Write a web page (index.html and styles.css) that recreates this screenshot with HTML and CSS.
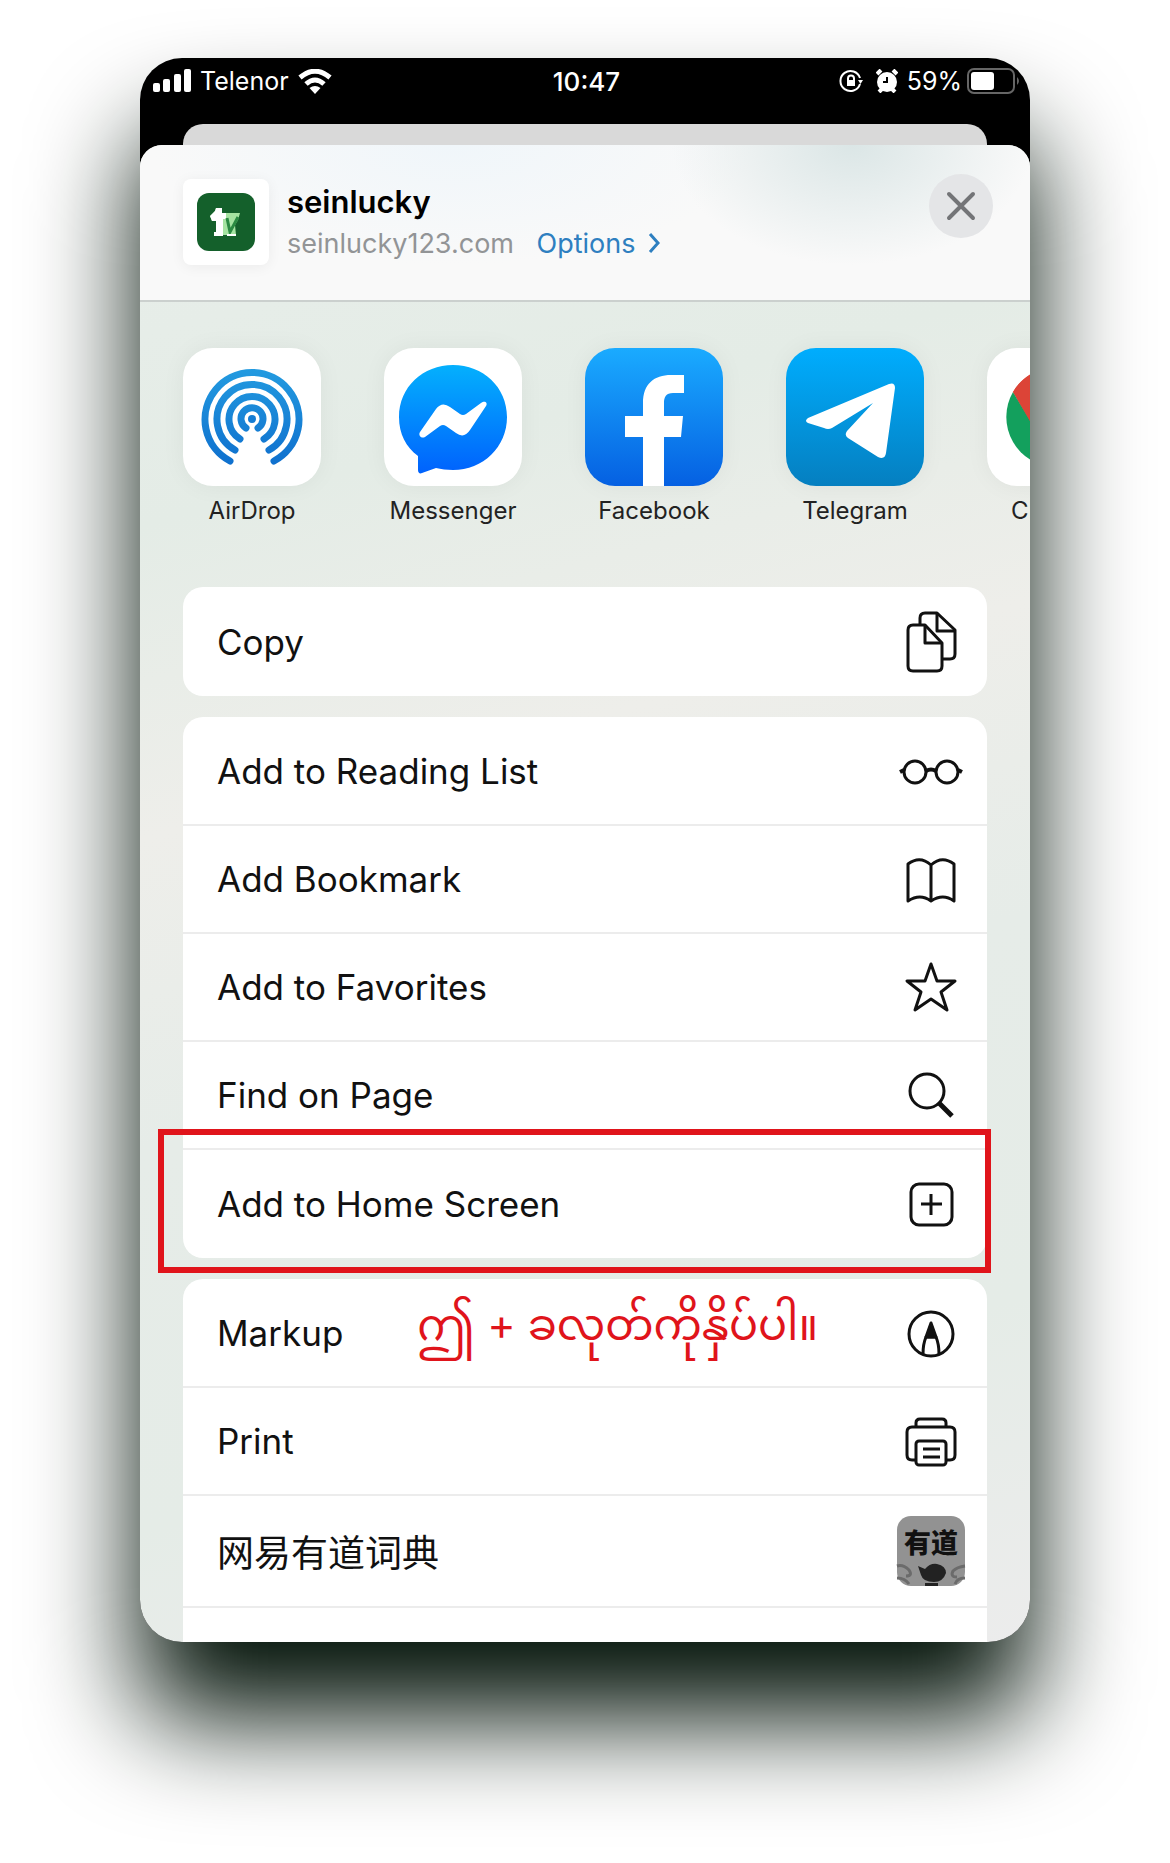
FILE: index.html
```html
<!DOCTYPE html>
<html lang="en">
<head>
<meta charset="utf-8">
<meta name="viewport" content="width=device-width, initial-scale=1">
<title>Share sheet</title>
<link rel="stylesheet" href="styles.css">
</head>
<body>
<main class="phone">
  <div class="status">
    <div class="status-side">
      <svg width="38" height="24" viewBox="0 0 38 24" fill="#fff"><rect x="0" y="14" width="7" height="9" rx="2"/><rect x="10" y="10" width="7" height="13" rx="2"/><rect x="21" y="5" width="7" height="18" rx="2"/><rect x="31" y="0" width="7" height="23" rx="2"/></svg>
      <span class="carrier">Telenor</span>
      <svg width="34" height="25" viewBox="0 0 34 25" fill="none" stroke="#fff" stroke-width="5"><path d="M2 8.500Q17-4 32 8.500"/><path d="M8 15Q17 7 26 15"/><path d="M11.500 19Q17 15 22.500 19L17 25Z" fill="#fff" stroke="none"/></svg>
    </div>
    <span class="clock">10:47</span>
    <div class="status-side status-right">
      <svg class="lock" width="24" height="24" viewBox="0 0 24 24" fill="none" stroke="#fff" stroke-width="2"><path d="M21 9A10 10 0 1 0 21 15" /><path d="M19 11h5l-2.500 4z" fill="#fff" stroke="none"/><path d="M9 12V9.500a3 3 0 0 1 6 0V12"/><rect x="8" y="11" width="8" height="6" fill="#fff" stroke="none"/></svg>
      <svg class="alarm" width="22" height="24" viewBox="0 0 22 24"><circle cx="11" cy="13" r="10" fill="#fff"/><path d="M1 5l4-4M21 5l-4-4M3 23l4-4M19 23l-4-4" stroke="#fff" stroke-width="4"/><path d="M11 8v5H7" fill="none" stroke="#000" stroke-width="2"/></svg>
      <span class="percent">59%</span>
      <svg width="53" height="26" viewBox="0 0 53 26"><rect x="1" y="1" width="46" height="24" rx="6" fill="none" stroke="#666" stroke-width="2"/><rect x="4" y="4" width="23" height="18" rx="3" fill="#fff"/><path d="M50 9q4 4 0 8z" fill="#666"/></svg>
    </div>
  </div>
  <div class="back-card"></div>
  <section class="sheet">
    <header class="head">
      <div class="thumb">
        <svg width="58" height="58" viewBox="0 0 58 58"><rect width="58" height="58" rx="12" fill="#14602b"/><path d="M13 23l5-5 1-3h6v5h18l-2 7-3 5 1 10H17v-3h2V28h-4z" fill="#a5e3a1"/><path d="M13 23l5-5 1-3h6v5h4v6h-3v17h-9v-4h2V28h-4z" fill="#fff"/><path d="M30 25l3 14 8-15" fill="none" stroke="#2b8a42" stroke-width="3"/><path d="M30 42h9" stroke="#fff" stroke-width="2"/></svg>
      </div>
      <div class="who">
        <h1 class="name">seinlucky</h1>
        <p class="site">seinlucky123.com <a class="options" href="#options">Options <svg class="chevron" width="13" height="20" viewBox="0 0 13 20" fill="none" stroke="#2e7fc0" stroke-width="3"><path d="M2 1l8 9-8 9"/></svg></a></p>
      </div>
      <button class="close" aria-label="Close"><svg width="30" height="30" viewBox="0 0 30 30" stroke="#737477" stroke-width="4" stroke-linecap="round"><path d="M3 3l24 24M27 3L3 27"/></svg></button>
    </header>
    <nav class="apps">
      <a class="app" href="#airdrop"><span class="tile"><svg width="138" height="138" viewBox="0 0 138 138" fill="none" stroke="url(#air)" stroke-width="7" stroke-linecap="round"><defs><linearGradient id="air" gradientUnits="userSpaceOnUse" x1="0" y1="20" x2="0" y2="116"><stop stop-color="#239be0"/><stop offset="1" stop-color="#0f70ce"/></linearGradient></defs><circle cx="69" cy="71" r="4" fill="#147cd3" stroke="none"/><path d="M63 80a11 11 0 1 1 12 0M57 91a23 23 0 1 1 24 0M52 102a35 35 0 1 1 34 0M47 113a47 47 0 1 1 44 0"/></svg></span>AirDrop</a>
      <a class="app" href="#messenger"><span class="tile"><svg width="138" height="138" viewBox="0 0 138 138"><defs><linearGradient id="msg" x1="0" y1="0" x2="0" y2="1"><stop stop-color="#04b0fd"/><stop offset="1" stop-color="#0062fd"/></linearGradient></defs><path d="M69 17C39 17 15 39 15 69c0 17 7 30 19 39v14c0 3 2 4 4 3l14-5c5 1 11 2 17 2 30 0 54-23 54-53S99 17 69 17z" fill="url(#msg)"/><path d="M36 84L52 61q6-8 14-2l10 7q3 2 6 0l15-11c4-3 7 0 5 3L86 82q-6 9-14 3l-10-7q-3-2-6 0L41 89c-4 2-7-2-5-5z" fill="#fff"/></svg></span>Messenger</a>
      <a class="app" href="#facebook"><span class="tile facebook"><svg width="138" height="138" viewBox="0 0 138 138"><path d="M58 138V89H40V68h18V55c0-19 11-28 28-28h13v18H88c-7 0-9 4-9 10v13h19l-2 21H79v49z" fill="#fff"/></svg></span>Facebook</a>
      <a class="app" href="#telegram"><span class="tile telegram"><svg width="138" height="138" viewBox="0 0 138 138"><path d="M22 70L103 36q6-2 6 4l-9 65q-1 7-8 4L62 90q-4-3-1-7L87 55 46 80q-4 2-8 0l-16-5q-4-2 0-5z" fill="#fff"/></svg></span>Telegram</a>
      <a class="app" href="#chrome"><span class="tile"><svg width="138" height="138" viewBox="0 0 138 138"><path d="M69 69L26 44A50 50 0 0 1 112 44z" fill="#dc4437"/><path d="M69 119A50 50 0 0 1 26 44L48 81z" fill="#13a05d"/><path d="M26 44L69 119V69z" fill="#13a05d"/><path d="M26 44A50 50 0 0 1 69 19V92L47 80z" fill="#dc4437"/><path d="M69 69L112 44A50 50 0 0 1 69 119z" fill="#ffce44"/><circle cx="69" cy="69" r="21" fill="#4c8bf5" stroke="#fff" stroke-width="4"/></svg></span>Chrome</a>
    </nav>
    <div class="group">
      <button class="row">Copy<svg class="icon" viewBox="0 0 70 70"><path d="M24 17V11q0-5 5-5h12l18 17v24q0 5-5 5h-7"/><path d="M41 6v18h18"/><path d="M17 18h12l17 18v23q0 5-5 5H17q-5 0-5-5V23q0-5 5-5z" fill="#fff"/><path d="M29 18v18h17"/></svg></button>
    </div>
    <div class="group">
      <button class="row">Add to Reading List<svg class="icon" viewBox="0 0 70 70"><circle cx="19" cy="36" r="11"/><circle cx="51" cy="36" r="11"/><path d="M30 35q5-3 10 0M8 34l-4 2M62 34l4 2" stroke-width="4"/></svg></button>
      <button class="row">Add Bookmark<svg class="icon" viewBox="0 0 70 70"><path d="M35 21Q24 11 12 20v37q12-8 23 0 12-8 23 0V20Q46 11 35 21zV56"/></svg></button>
      <button class="row">Add to Favorites<svg class="icon" viewBox="0 0 70 70"><path d="M35 12l6 17h18L45 40l6 18-16-11-16 11 6-18-14-11h18z"/></svg></button>
      <button class="row">Find on Page<svg class="icon" viewBox="0 0 70 70"><circle cx="31" cy="31" r="17"/><path d="M43 43l13 13" stroke-width="5"/></svg></button>
      <button class="row marked">Add to Home Screen<svg class="icon" viewBox="0 0 70 70"><rect x="15" y="15" width="41" height="41" rx="8"/><path d="M35 25v21M25 35h21"/></svg></button>
    </div>
    <div class="group">
      <button class="row">Markup<span class="note" lang="my">ဤ + ခလုတ်ကိုနှိပ်ပါ။</span><svg class="icon" viewBox="0 0 70 70"><circle cx="35" cy="36" r="22"/><path d="M27 56q0-10 3-17h10q3 7 3 17"/><path d="M35 25l5 14H30z" fill="#111"/></svg></button>
      <button class="row">Print<svg class="icon" viewBox="0 0 70 70"><path d="M20 20v-3q0-4 4-4h22q4 0 4 4v3M19 54h-3q-5 0-5-5V26q0-5 5-5h38q5 0 5 5v23q0 5-5 5h-3"/><rect x="20" y="35" width="30" height="24" rx="3"/><path d="M27 43h17M27 51h17"/></svg></button>
      <button class="row row-tall" lang="zh">网易有道词典<svg class="icon app-icon" viewBox="0 0 70 70"><rect x="1" y="0" width="68" height="70" rx="14" fill="#929292"/><path d="M1 50q6-2 12 4 4 6-3 6M69 50q-8 1-12 5-3 6 4 6M1 62q8 0 12 6M69 62q-8 0-10 6" fill="none" stroke="#6b6b6b" stroke-width="3"/><path d="M22 50l7 3q5-6 12-5 9 2 9 9-3 9-12 9-11 0-13-7zM29 67h13v3H29z" fill="#222"/><text x="35" y="37" text-anchor="middle" class="icon-word">有道</text></svg></button>
      <div class="rest"></div>
    </div>
  </section>
</main>
</body>
</html>
```
FILE: styles.css
```css
* { box-sizing: border-box; }
body {
  margin: 0;
  padding: 58px 140px 221px;
  background: #fff;
  font-family: Inter, "Noto Sans CJK SC", "Noto Sans Myanmar", sans-serif;
  color: #111;
}
.phone {
  overflow: hidden;
  border-radius: 42px;
  background: #000;
  box-shadow: 0 77px 106px #04140a;
}
.status {
  display: grid;
  grid-template-columns: 1fr auto 1fr;
  align-items: center;
  height: 66px;
  padding: 0 10px 20px 13px;
  color: #fff;
  font-size: 25px;
}
.status-side { display: flex; align-items: center; gap: 9px; }
.status-right { justify-content: flex-end; gap: 5px; }
.lock { margin-right: 8px; }
.alarm { margin-right: 4px; }
.clock { font-size: 26px; font-weight: 500; }
.back-card {
  height: 21px;
  margin: 0 43px;
  border-radius: 20px 20px 0 0;
  background: #d9d9d9;
}
.sheet {
  border-radius: 22px 22px 0 0;
  background: linear-gradient(165deg, #e8eeea 0%, #e4ece6 22%, #eeeeea 40%, #e6ece8 58%, #e5ece7 80%, #ececec 100%);
  overflow: hidden;
}
.head {
  display: flex;
  align-items: flex-start;
  gap: 18px;
  height: 157px;
  padding: 34px 37px 0 43px;
  border-bottom: 2px solid #cbd0ce;
  background:
    radial-gradient(ellipse 180px 120px at 80% 0, #dbe6e6 0%, transparent 100%),
    radial-gradient(ellipse 300px 120px at 35% 0, #f0f6fa 0%, transparent 100%),
    #f9f9f9;
}
.thumb {
  display: grid;
  place-items: center;
  width: 86px;
  height: 86px;
  border-radius: 8px;
  background: #fff;
  box-shadow: 0 2px 14px rgba(0, 0, 0, .06);
}
.who { flex: 1; }
.name { margin: 3px 0 0; font-size: 31px; line-height: 40px; font-weight: 600; color: #000; }
.site { margin: 0; font-size: 27px; line-height: 43px; color: #929496; }
.options { margin-left: 15px; color: #2e7fc0; text-decoration: none; }
.chevron { margin-left: 5px; }
.close {
  display: grid;
  place-items: center;
  width: 64px;
  height: 64px;
  margin-top: -5px;
  padding: 0;
  border: 0;
  border-radius: 50%;
  background: #e4e5e7;
}
.apps {
  display: flex;
  gap: 63px;
  height: 240px;
  padding: 46px 0 0 43px;
  overflow: hidden;
}
.app {
  flex: none;
  display: flex;
  flex-direction: column;
  align-items: center;
  gap: 9px;
  width: 138px;
  color: #222;
  font-size: 24px;
  line-height: 32px;
  text-decoration: none;
}
.tile {
  height: 138px;
  border-radius: 30px;
  background: #fff;
  overflow: hidden;
  box-shadow: 0 0 24px rgba(0, 0, 0, .05);
}
.facebook { background: linear-gradient(#1aabff, #0560e2); }
.telegram { background: linear-gradient(#00adfe, #057fc0); }
.group {
  margin: 45px 43px 0;
  padding-top: 1px;
  border-radius: 20px;
  background: #fff;
}
.group + .group { margin-top: 21px; }
.group:last-child { border-radius: 20px 20px 0 0; }
.row {
  position: relative;
  display: flex;
  align-items: center;
  justify-content: space-between;
  width: 100%;
  height: 108px;
  padding: 0 21px 0 34px;
  border: 0;
  border-bottom: 2px solid #ececec;
  background: none;
  color: #111;
  font: inherit;
  font-size: 35px;
  text-align: left;
}
.row:last-child { border-bottom: 0; }
.row-tall { height: 112px; font-size: 37px; }
.icon {
  width: 70px;
  height: 70px;
  fill: none;
  stroke: #111;
  stroke-width: 3;
  stroke-linejoin: round;
}
.app-icon { stroke: none; }
.icon-word { font: 900 27px "Noto Sans CJK SC", sans-serif; fill: #111; }
.marked::after {
  content: "";
  position: absolute;
  inset: -21px -4px -15px -25px;
  border: 6px solid #e0141b;
}
.note {
  margin: 0 auto 18px 74px;
  color: #e0141b;
  font-size: 43px;
  line-height: 80px;
}
.rest { height: 34px; }
```
